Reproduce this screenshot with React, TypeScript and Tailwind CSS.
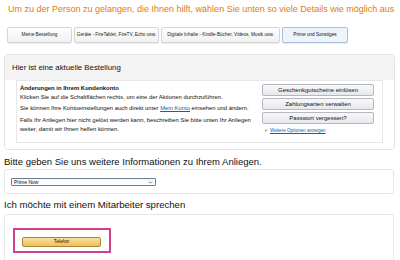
import { ChevronDown } from 'lucide-react';

const TABS = [
  { label: 'Meine Bestellung', w: 'w-[65px]' },
  { label: 'Geräte - FireTablet, FireTV, Echo usw.', w: 'w-[85px]' },
  { label: 'Digitale Inhalte - Kindle-Bücher, Videos, Musik usw.', w: 'w-[119px]' },
  { label: 'Prime und Sonstiges', w: 'w-[66px]', active: true },
];

const ACTIONS = ['Geschenkgutscheine einlösen', 'Zahlungsarten verwalten', 'Passwort vergessen?'];

export default function App() {
  return (
    <div
      className="w-[400px] h-[260px] overflow-hidden bg-white text-[#111]"
      style={{ fontFamily: '"Liberation Sans", Arial, sans-serif' }}
    >
      {/* Titel */}
      <div className="pt-[3px] pl-[8px] text-[9px] leading-[12px] text-[#e47911] whitespace-nowrap">
        Um zu der Person zu gelangen, die Ihnen hilft, wählen Sie unten so viele Details wie möglich aus
      </div>

      {/* Kategorien */}
      <div className="flex gap-[2px] pl-[7px] mt-[12px]">
        {TABS.map((t) => (
          <div
            key={t.label}
            className={`${t.w} h-[16px] flex items-center justify-center rounded-[2px] border text-[4.7px] whitespace-nowrap shadow-[0_1px_1px_rgba(0,0,0,0.08)] ${
              t.active
                ? 'bg-[#edf4fb] border-[#a9c0d8] text-[#111]'
                : 'bg-gradient-to-b from-[#fdfdfd] to-[#f1f1f1] border-[#d5d5d5] text-[#222]'
            }`}
          >
            {t.label}
          </div>
        ))}
      </div>

      {/* Aktuelle Bestellung */}
      <div className="mx-[4px] mt-[11px] w-[391px] border border-[#e3e3e3] rounded-[4px] overflow-hidden">
        <div className="h-[25px] bg-[#f4f4f4] flex items-center pl-[7px] text-[7.8px] text-[#111]">
          Hier ist eine aktuelle Bestellung
        </div>
        <div className="px-[11px] pb-[6px] bg-white">
          <div className="h-[63px] bg-white border border-[#e7e7e7] flex justify-between">
            <div className="pl-[3px] pt-[3px] text-[5.9px] leading-[9px] text-[#111] whitespace-nowrap">
              <div className="font-bold">Änderungen in Ihrem Kundenkonto</div>
              <div>Klicken Sie auf die Schaltflächen rechts, um eine der Aktionen durchzuführen.</div>
              <div className="mt-[2px]">
                Sie können Ihre Kontoeinstellungen auch direkt unter{' '}
                <span className="text-[#0066c0] underline">Mein Konto</span> einsehen und ändern.
              </div>
              <div className="mt-[3px]">
                Falls Ihr Anliegen hier nicht gelöst werden kann, beschreiben Sie bitte unten Ihr Anliegen
                <br />
                weiter, damit wir Ihnen helfen können.
              </div>
            </div>
            <div className="w-[112px] mr-[8px] pt-[3px] flex flex-col gap-[2px] shrink-0">
              {ACTIONS.map((a) => (
                <div
                  key={a}
                  className="h-[12px] flex items-center justify-center rounded-[2px] border border-[#b4b8be] bg-gradient-to-b from-[#f7f8fa] to-[#e7e9ec] text-[6px] text-[#111]"
                >
                  {a}
                </div>
              ))}
              <div className="flex items-center gap-[2px] pl-[2px] mt-[2px] text-[4.6px] leading-[6px]">
                <span className="text-[#e47911] text-[4px]">▼</span>
                <span className="text-[#0066c0] underline">Weitere Optionen anzeigen</span>
              </div>
            </div>
          </div>
        </div>
      </div>

      {/* Weitere Informationen */}
      <div className="mt-[6px] pl-[4px] text-[9.5px] leading-[12px] text-[#111] whitespace-nowrap">
        Bitte geben Sie uns weitere Informationen zu Ihrem Anliegen.
      </div>
      <div className="mx-[4px] mt-[1px] w-[390px] h-[25px] border border-[#e7e7e7] rounded-[3px] pt-[8px] pl-[6px]">
        <div className="w-[145px] h-[8px] border border-[#6f7e96] rounded-[1px] bg-gradient-to-b from-[#f4f7fb] to-white flex items-center justify-between pl-[2px] pr-[2px]">
          <span className="text-[5px] leading-[6px]">Prime Now</span>
          <ChevronDown size={5} strokeWidth={3} className="text-[#333]" />
        </div>
      </div>

      {/* Mitarbeiter */}
      <div className="mt-[5px] pl-[4px] text-[9.6px] leading-[12px] text-[#111] whitespace-nowrap">
        Ich möchte mit einem Mitarbeiter sprechen
      </div>
      <div className="mx-[4px] mt-[3px] w-[390px] h-[60px] border border-[#e7e7e7] rounded-[3px] pt-[13px] pl-[8px]">
        <div className="w-[98px] h-[25px] border-2 border-[#d2408a] pt-[7px] pl-[7px]">
          <div className="w-[79px] h-[10px] flex items-center justify-center rounded-[2px] border border-[#a88734] bg-gradient-to-b from-[#f7dfa5] to-[#f0c14b] text-[4.8px] text-[#111]">
            Telefon
          </div>
        </div>
      </div>
    </div>
  );
}
